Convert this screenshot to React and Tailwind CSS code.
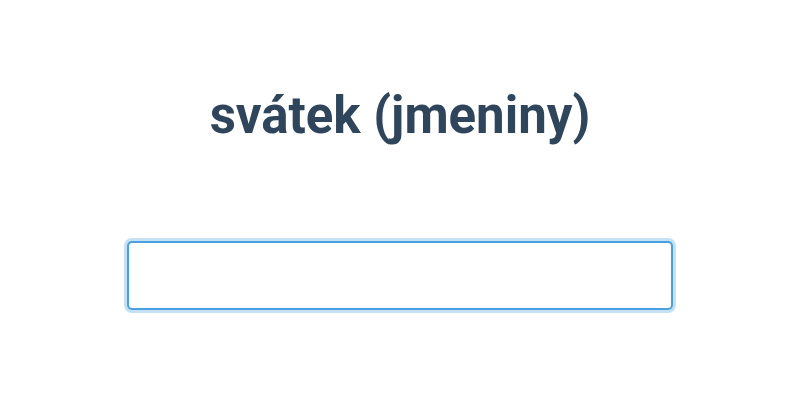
export default function App() {
  return (
    <div className="w-[800px] h-[400px] bg-white flex flex-col items-center font-['Roboto',sans-serif]">
      <h1 className="mt-[86px] text-[51px] leading-[60px] font-bold text-[#2f455c]">svátek (jmeniny)</h1>
      <input
        type="text"
        className="mt-[95px] w-[546px] h-[69px] rounded-[5px] border-2 border-[#4a9fe0] outline-none ring-[3px] ring-[#c4e1f6] bg-white"
      />
    </div>
  )
}
